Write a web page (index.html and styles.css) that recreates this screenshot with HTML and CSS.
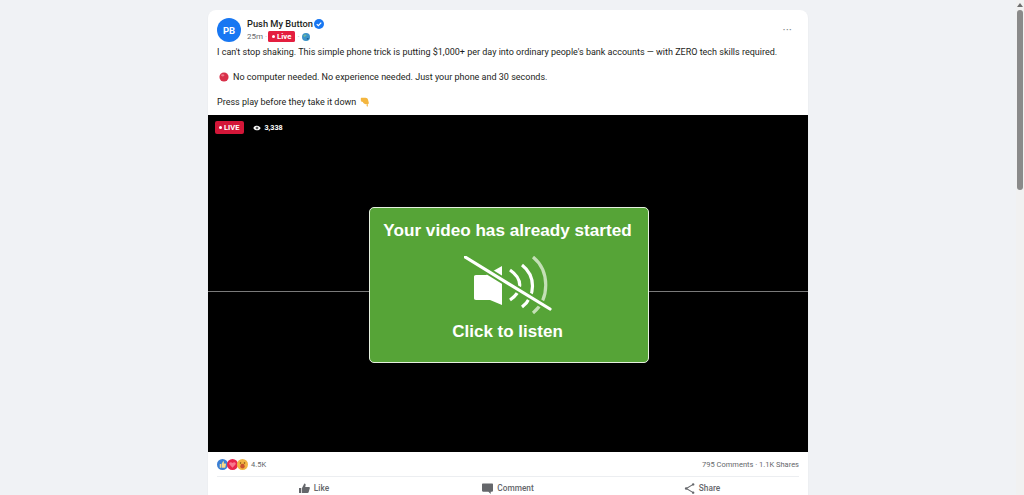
FILE: index.html

```html
<!DOCTYPE html>
<html lang="en">
<head>
  <meta charset="UTF-8">
  <title>Push My Button</title>
  <link rel="stylesheet" href="styles.css">
</head>
<body>

  <div class="page">
    <article class="post">
      <header class="post-head">
        <div class="avatar">PB</div>
        <div class="author">
          <div class="author-name">
            Push My Button
            <svg class="verified" viewBox="0 0 16 16"><circle cx="8" cy="8" r="8" fill="#1877f2"/><path d="M4.4 8.2l2.5 2.5 4.7-5" fill="none" stroke="#fff" stroke-width="1.9"/></svg>
          </div>
          <div class="author-meta">
            <span>25m</span>
            <span class="dot">·</span>
            <span class="live-tag"><i></i>Live</span>
            <span class="dot">·</span>
            <svg class="globe" viewBox="0 0 10 10"><circle cx="5" cy="5" r="5" fill="#3b93c9"/><path d="M2 2.5c1.500-1 3-.8 3.800.2-.5 1.300-2 .9-2.300 2.300C2.400 5.300 1.800 4 2 2.500z" fill="#6fb89a"/><path d="M6 6.500c1-.5 2-.4 2.500 0-.3 1-1.200 1.800-2 1.800-.6-.5-.8-1.200-.5-1.800z" fill="#1f5f8f"/></svg>
          </div>
        </div>
        <div class="more">···</div>
      </header>

      <div class="post-text">
        <p>I can't stop shaking. This simple phone trick is putting $1,000+ per day into ordinary people's bank accounts — with ZERO tech skills required.</p>
        <p><svg class="emoji" viewBox="0 0 12 12"><circle cx="6" cy="6" r="5.500" fill="#d8304a"/><ellipse cx="4.500" cy="4" rx="2" ry="1.300" fill="#ee7a8a"/></svg>No computer needed. No experience needed. Just your phone and 30 seconds.</p>
        <p>Press play before they take it down <svg class="emoji hand" viewBox="0 0 12 12"><path d="M1.500 1h5c1.500 0 3 1 3.200 2.500l.8 3c.3 1.200-.3 2-1.300 2.200L9.500 11c-.2.800-1.700.6-1.600-.4L8 8.500c-2 .3-4-.5-4.500-2.500L1.500 5.300c-.9-.3-.9-1 0-1.300-.8-.5-.8-2.500 0-3z" fill="#f4b63f"/></svg></p>
      </div>

      <div class="video">
        <div class="video-line"></div>
        <div class="video-stats">
          <span class="live-badge"><i></i>LIVE</span>
          <span class="viewers">
            <svg class="eye" viewBox="0 0 12 8"><path d="M6 .5C3.500.5 1.500 2 .5 4c1 2 3 3.500 5.500 3.500S10.500 6 11.500 4C10.500 2 8.500.5 6 .5z" fill="#fff"/><circle cx="6" cy="4" r="2" fill="#000"/><circle cx="6" cy="4" r="1" fill="#fff"/></svg>
            3,338
          </span>
        </div>
        <div class="unmute">
          <div class="unmute-title">Your video has already started</div>
          <svg class="unmute-icon" viewBox="0 0 90 60">
            <path d="M12 19h10L38 10v39L26 44H12c-1.500 0-2-.8-2-2V21c0-1.200.5-2 2-2z" fill="#fff"/>
            <g fill="none" stroke="#fff" stroke-width="3.200">
              <path d="M46 14c13 9 13 21 0 30"/>
              <path d="M58 9c14 11 14 31 0 42"/>
              <path d="M69 1c17 14 17 42 0 56" stroke="#c4e0b6"/>
            </g>
            <path d="M1 1l85 52" stroke="#56a437" stroke-width="7"/>
            <path d="M1 1l85 52" stroke="#fff" stroke-width="3.200" stroke-linecap="round"/>
          </svg>
          <div class="unmute-sub">Click to listen</div>
        </div>
      </div>

      <div class="post-counts">
        <div class="reactions">
          <svg class="react" viewBox="0 0 10 10"><circle cx="5" cy="5" r="5" fill="#3a7fd5"/><path d="M2.500 4.500h1.200V8H2.500zM4.200 4.500L5.500 2c.7 0 1 .5.800 1.200l-.2.800h1.500c.5 0 .7.400.6.800L7.600 7.500c-.1.300-.3.500-.6.500H4.200z" fill="#f6d98a"/></svg>
          <svg class="react" viewBox="0 0 10 10"><circle cx="5" cy="5" r="5" fill="#e8254b"/><path d="M5 8L2.300 5c-1-1.300.9-3 2.700-1.300C6.800 2 8.700 3.700 7.700 5z" fill="#f7788f"/></svg>
          <svg class="react" viewBox="0 0 10 10"><circle cx="5" cy="5" r="5" fill="#f2b544"/><ellipse cx="5" cy="6.500" rx="2" ry="2.200" fill="#c9542f"/><circle cx="3.200" cy="3.600" r=".7" fill="#7a4a12"/><circle cx="6.800" cy="3.600" r=".7" fill="#7a4a12"/></svg>
          <span class="react-count">4.5K</span>
        </div>
        <div>795 Comments · 1.1K Shares</div>
      </div>

      <div class="post-actions">
        <div class="action">
          <svg viewBox="0 0 12 12"><path d="M0 5.500h2.500V11H0zM3.300 5.500L5.800.5c1.200 0 1.700 1 1.400 2L6.800 4.300h3.900c1 0 1.300.8 1.100 1.500l-1.300 4.400c-.2.600-.6.800-1.200.8H3.300z" fill="#65676b"/></svg>
          Like
        </div>
        <div class="action">
          <svg viewBox="0 0 12 12"><path d="M1 .5h10c.5 0 1 .5 1 1v7c0 .5-.5 1-1 1H9.500V12L7 9.500H1c-.5 0-1-.5-1-1v-7c0-.5.500-1 1-1z" fill="#65676b"/></svg>
          Comment
        </div>
        <div class="action">
          <svg viewBox="0 0 12 12"><path d="M10 1.500L2.500 6l7.500 4.500" fill="none" stroke="#65676b" stroke-width="1.100"/><circle cx="10" cy="1.500" r="1.300" fill="#65676b"/><circle cx="2.300" cy="6" r="1.300" fill="#65676b"/><circle cx="10" cy="10.500" r="1.300" fill="#65676b"/></svg>
          Share
        </div>
      </div>
    </article>
  </div>

  <div class="scrollbar">
    <div class="scroll-arrow"></div>
    <div class="scroll-thumb"></div>
  </div>

</body>
</html>
```

FILE: styles.css

```css
html, body {
  height: 100%;
  overflow: hidden;
}

body {
  margin: 0;
  background: #f0f2f5;
  font-family: Roboto, "Noto Sans", sans-serif;
  color: #1c1e21;
  display: flex;
}

.page {
  flex: 1;
  display: flex;
  justify-content: center;
  padding-top: 10px;
}

.post {
  width: 600px;
  height: 485px;
  background: #fff;
  border-radius: 8px 8px 0 0;
  box-shadow: 0 1px 2px rgba(0, 0, 0, 0.06);
}

.post-head {
  display: flex;
  align-items: center;
  padding: 7px 9px 0;
  gap: 6px;
}

.avatar {
  width: 24px;
  height: 24px;
  border-radius: 50%;
  background: #1877f2;
  color: #fff;
  font-size: 9.500px;
  font-weight: 700;
  display: flex;
  align-items: center;
  justify-content: center;
}

.author {
  flex: 1;
  padding-top: 1px;
}

.author-name {
  font-size: 9.300px;
  font-weight: 500;
  line-height: 12px;
  display: flex;
  align-items: center;
  gap: 1.500px;
}

.verified {
  width: 10px;
  height: 10px;
}

.author-meta {
  display: flex;
  align-items: center;
  gap: 2px;
  font-size: 8px;
  color: #65676b;
  line-height: 13px;
}

.dot {
  width: 1px;
  text-align: center;
  color: #b0b3b8;
}

.live-tag {
  background: #e41e3f;
  color: #fff;
  font-size: 7.800px;
  font-weight: 700;
  line-height: 11px;
  padding: 0 4px;
  border-radius: 1.500px;
  display: flex;
  align-items: center;
  gap: 2px;
}

.live-tag i,
.live-badge i {
  width: 3px;
  height: 3px;
  border-radius: 50%;
  background: #fff;
}

.globe {
  width: 8px;
  height: 8px;
  margin-left: 2px;
}

.more {
  font-size: 12px;
  line-height: 10px;
  color: #8a8d91;
  margin: 0 7px 0 0;
}

.post-text {
  padding: 3px 9px 0;
  font-size: 9px;
  line-height: 13px;
}

.post-text p {
  margin: 0 0 12px;
}

.post-text p:last-child {
  margin-bottom: 0;
}

.emoji {
  width: 10px;
  height: 10px;
  margin: 0 4px 0 2px;
  vertical-align: -1.500px;
}

.hand {
  margin: 0 0 0 1px;
}

.video {
  margin-top: 6px;
  height: 337px;
  background: #000;
  position: relative;
}

.video-line {
  position: absolute;
  left: 0;
  right: 0;
  top: 176px;
  height: 1px;
  background: #7a7a7a;
}

.video-stats {
  position: absolute;
  left: 7px;
  top: 6px;
  display: flex;
  align-items: center;
  gap: 9px;
  color: #fff;
  font-size: 7.500px;
  font-weight: 700;
}

.live-badge {
  background: #d31638;
  border-radius: 2px;
  padding: 0 5px 0 4px;
  line-height: 13px;
  display: flex;
  align-items: center;
  gap: 2px;
}

.viewers {
  display: flex;
  align-items: center;
  gap: 3px;
  font-size: 7.200px;
}

.eye {
  width: 8px;
  height: 6px;
}

.unmute {
  position: absolute;
  left: 161px;
  top: 92px;
  width: 280px;
  height: 156px;
  box-sizing: border-box;
  background: #56a437;
  border: 1.500px solid #e6f0e0;
  border-radius: 5px;
  color: #fff;
  font-family: "Liberation Sans", Arial, sans-serif;
  font-weight: 700;
  display: flex;
  flex-direction: column;
  align-items: center;
  padding-top: 12px;
}

.unmute-title {
  font-size: 17.150px;
  line-height: 20px;
  white-space: nowrap;
  margin-right: 3px;
}

.unmute-icon {
  width: 90px;
  height: 60px;
  margin-top: 15.500px;
}

.unmute-sub {
  font-size: 17px;
  line-height: 20px;
  margin: 6.500px 3px 0 0;
}

.post-counts {
  display: flex;
  justify-content: space-between;
  align-items: center;
  height: 24px;
  margin: 0 9px;
  border-bottom: 1px solid #eceef1;
  font-size: 7.500px;
  color: #65676b;
}

.reactions {
  display: flex;
  align-items: center;
}

.react {
  width: 11px;
  height: 11px;
  margin-right: -1px;
}

.react-count {
  margin-left: 4px;
}

.post-actions {
  display: flex;
  margin: 0 9px;
  height: 22px;
}

.action {
  flex: 1;
  display: flex;
  align-items: center;
  justify-content: center;
  gap: 4px;
  font-size: 8.300px;
  font-weight: 500;
  color: #65676b;
}

.action svg {
  width: 11px;
  height: 11px;
}

.scrollbar {
  width: 8px;
  background: #f1f1f1;
  display: flex;
  flex-direction: column;
  align-items: center;
}

.scroll-arrow {
  margin: 3px 0 3px;
  border: 3px solid transparent;
  border-top: 0;
  border-bottom: 4px solid #6e6e6e;
}

.scroll-thumb {
  width: 6px;
  height: 180px;
  background: #8a8a8a;
  border-radius: 3px;
}
```
